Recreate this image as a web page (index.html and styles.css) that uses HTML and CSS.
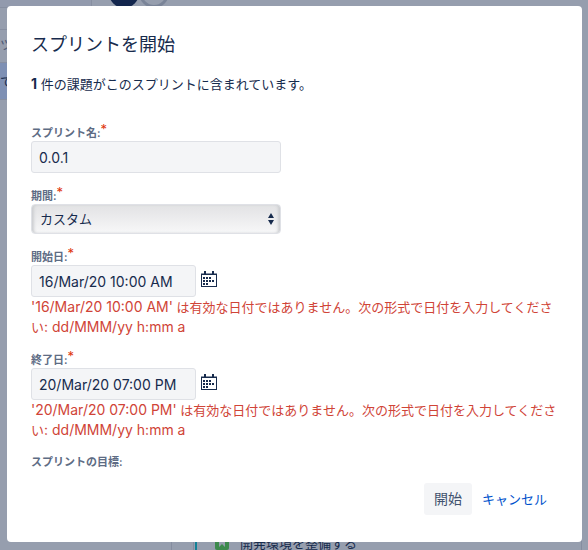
FILE: index.html
```html
<!DOCTYPE html>
<html lang="ja">
<head>
  <meta charset="utf-8">
  <meta name="viewport" content="width=device-width, initial-scale=1">
  <title>スプリントを開始</title>
  <link rel="stylesheet" href="styles.css">
</head>
<body>
  <!-- Dimmed board -->
  <div class="board" aria-hidden="true">
    <div class="board-top">
      <div class="sidebar">
        <div class="sidebar-item sidebar-head"></div>
        <div class="sidebar-item"></div>
        <div class="sidebar-item">ツ</div>
        <div class="sidebar-item selected">て</div>
      </div>
      <div class="avatars">
        <span class="avatar filled"></span>
        <span class="avatar"></span>
      </div>
    </div>
    <div class="board-bottom">
      <div class="column"></div>
      <div class="gutter"></div>
      <div class="issue">
        <svg width="14" height="14" viewBox="0 0 14 14">
          <rect width="14" height="14" rx="2" fill="#3d8a4d"/>
          <path d="M4 3h6v8L7 8l-3 3z" fill="#969eae"/>
        </svg>
        <span>開発環境を整備する</span>
      </div>
      <div class="edge"></div>
    </div>
  </div>

  <!-- Dialog -->
  <main class="dialog" role="dialog" aria-labelledby="dialog-title">
    <h1 id="dialog-title">スプリントを開始</h1>
    <p class="summary"><strong>1</strong> 件の課題がこのスプリントに含まれています。</p>
    <form>
      <div class="field">
        <label for="name">スプリント名:<span class="required">*</span></label>
        <input type="text" id="name" class="text" value="0.0.1">
      </div>

      <div class="field">
        <label for="duration">期間:<span class="required">*</span></label>
        <div class="select">
          <select id="duration">
            <option>カスタム</option>
          </select>
          <svg class="arrows" width="6" height="12" viewBox="0 0 6 12">
            <path d="M3 0l3 5H0zM0 7h6l-3 5z" fill="#172b4d"/>
          </svg>
        </div>
      </div>

      <div class="field">
        <label for="start">開始日:<span class="required">*</span></label>
        <div class="date-row">
          <input type="text" id="start" class="text date" value="16/Mar/20 10:00 AM">
          <button type="button" class="calendar" aria-label="開始日を選択">
            <svg width="16" height="16" viewBox="0 0 16 16" fill="#172b4d">
              <path d="M0 2h16v1H0z" opacity=".5"/>
              <path d="M0 3h16v13H0zM1 4v11h14V4z" fill-rule="evenodd"/>
              <path d="M3 0h2v3H3zM11 0h2v3h-2zM2 6h2v2H2zM5 6h2v2H5zM8 6h2v2H8zM2 9h2v2H2zM5 9h2v2H5zM8 9h2v2H8zM11 9h2v2h-2zM2 12h2v2H2zM5 12h2v2H5z"/>
            </svg>
          </button>
        </div>
        <p class="error"><span lang="en">'16/Mar/20 10:00 AM'</span> は有効な日付ではありません。次の形式で日付を入力してください<span lang="en">: dd/MMM/yy h:mm a</span></p>
      </div>

      <div class="field">
        <label for="end">終了日:<span class="required">*</span></label>
        <div class="date-row">
          <input type="text" id="end" class="text date" value="20/Mar/20 07:00 PM">
          <button type="button" class="calendar" aria-label="終了日を選択">
            <svg width="16" height="16" viewBox="0 0 16 16" fill="#172b4d">
              <path d="M0 2h16v1H0z" opacity=".5"/>
              <path d="M0 3h16v13H0zM1 4v11h14V4z" fill-rule="evenodd"/>
              <path d="M3 0h2v3H3zM11 0h2v3h-2zM2 6h2v2H2zM5 6h2v2H5zM8 6h2v2H8zM2 9h2v2H2zM5 9h2v2H5zM8 9h2v2H8zM11 9h2v2h-2zM2 12h2v2H2zM5 12h2v2H5z"/>
            </svg>
          </button>
        </div>
        <p class="error"><span lang="en">'20/Mar/20 07:00 PM'</span> は有効な日付ではありません。次の形式で日付を入力してください<span lang="en">: dd/MMM/yy h:mm a</span></p>
      </div>

      <div class="field">
        <span class="label">スプリントの目標:</span>
      </div>

      <div class="actions">
        <button type="submit" class="submit">開始</button>
        <a href="#">キャンセル</a>
      </div>
    </form>
  </main>
</body>
</html>
```

FILE: styles.css
```css
* {
  box-sizing: border-box;
}

body {
  margin: 0;
  min-height: 100vh;
  background-color: #969eae;
  color: #172b4d;
  font-family: Inter, "Noto Sans CJK JP", sans-serif;
  font-size: 13px;
  line-height: 20px;
}

/* Board behind the dialog */
.board {
  display: flex;
  flex-direction: column;
  justify-content: space-between;
  height: 100vh;
  overflow: hidden;
}

.board-top,
.board-bottom {
  display: flex;
}

.sidebar {
  width: 92px;
  border-right: 1px solid #878fa1;
}

.sidebar-item {
  height: 33px;
  padding-top: 4px;
  border-bottom: 1px solid #878fa1;
  color: #4b5975;
}

.sidebar-head {
  height: 8px;
  padding: 0;
  background-color: #929aad;
}

.sidebar-item:nth-child(2) {
  height: 22px;
}

.sidebar-item.selected {
  height: 37px;
  padding-top: 8px;
  background-color: #7e90b4;
  color: #172b4d;
}

.avatars {
  display: flex;
  margin: -22px 0 0 17px;
}

.avatar {
  width: 30px;
  height: 30px;
  border: 3px solid #7a8498;
  border-radius: 50%;
}

.avatar.filled {
  border: none;
  background-color: #13264d;
}

.column {
  width: 172px;
  border-right: 1px solid #858da0;
}

.gutter {
  width: 22px;
  border-right: 1px solid #858da0;
}

.issue {
  display: flex;
  flex: 1;
  align-items: center;
  gap: 11px;
  height: 15px;
  margin-left: 1px;
  padding-left: 18px;
  border-left: 2px solid #128197;
}

.edge {
  width: 7px;
  border-left: 1px solid #858da0;
}

/* Dialog */
.dialog {
  position: absolute;
  top: 6px;
  left: 7px;
  right: 6px;
  padding: 24px 24px 27px;
  border-radius: 4px;
  background-color: #fff;
}

h1 {
  margin: 0 0 14px;
  font-size: 18px;
  font-weight: 400;
  line-height: 30px;
}

.summary {
  margin: 0 0 31px;
}

.summary strong {
  font-size: 14px;
}

.field {
  margin-bottom: 15px;
}

label,
.label {
  display: block;
  height: 16px;
  color: #5e6c84;
  font-size: 11px;
  font-weight: 600;
  line-height: 14px;
}

.required {
  position: relative;
  top: -3px;
  color: #de350b;
  font-size: 13px;
  font-weight: 400;
}

.text {
  display: block;
  width: 250px;
  max-width: 100%;
  height: 32px;
  padding: 0 7px;
  border: 1px solid #dfe1e6;
  border-radius: 3px;
  background-color: #f4f5f7;
  color: #172b4d;
  font: inherit;
  font-size: 14px;
}

.text.date {
  width: 165px;
}

.select {
  position: relative;
  width: 250px;
  max-width: 100%;
}

select {
  display: block;
  width: 100%;
  height: 30px;
  padding: 0 8px;
  border: 1px solid #dfe1e6;
  border-radius: 4px;
  background: linear-gradient(#e2e2e4, #f7f7f8);
  box-shadow: inset 3px 0 3px -1px #ccced1, inset -3px 0 3px -1px #ccced1;
  color: #172b4d;
  font: inherit;
  appearance: none;
}

.arrows {
  position: absolute;
  top: 9px;
  right: 7px;
  pointer-events: none;
}

.date-row {
  display: flex;
  align-items: center;
  gap: 5px;
}

.calendar {
  display: flex;
  padding: 0 0 4px;
  border: none;
  background: none;
  cursor: pointer;
}

.error {
  margin: 0;
  color: #d04437;
}

.error span {
  font-size: 14px;
}

.actions {
  display: flex;
  justify-content: flex-end;
  align-items: center;
  gap: 10px;
  margin-top: -3px;
  padding-right: 11px;
}

.submit {
  height: 32px;
  padding: 0 10px;
  border: none;
  border-radius: 3px;
  background-color: #f4f5f7;
  color: #42526e;
  font: inherit;
  font-size: 14px;
  cursor: pointer;
}

.actions a {
  color: #0052cc;
  text-decoration: none;
}
```
